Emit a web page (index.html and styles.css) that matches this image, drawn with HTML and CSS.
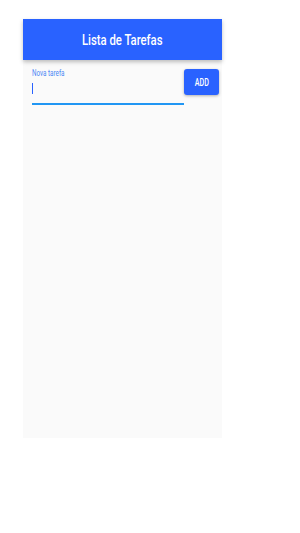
FILE: index.html
```html
<!DOCTYPE html>
<html lang="pt">
  <head>
    <meta charset="UTF-8" />
    <meta name="viewport" content="width=device-width, initial-scale=1.0" />
    <title>Lista de Tarefas</title>
    <link rel="stylesheet" href="styles.css">
  </head>
  <body>
    <div class="app">
      <header class="app-bar">
        <h1>Lista de Tarefas</h1>
      </header>

      <div class="form-row">
        <div class="field">
          <label class="field-label">Nova tarefa</label>
          <div class="field-input">
            <span class="cursor"></span>
          </div>
        </div>
        <button class="add-btn"><span>ADD</span></button>
      </div>
    </div>
  </body>
</html>
```

FILE: styles.css
```css
body {
  margin: 0;
  padding: 19px 0 0 23px;
  background: #fff;
  font-family: Roboto, "Liberation Sans", sans-serif;
}

.app {
  width: 199px;
  height: 419px;
  background: #fafafa;
  display: flex;
  flex-direction: column;
}

.app-bar {
  height: 41px;
  background: #2962ff;
  display: flex;
  align-items: center;
  justify-content: center;
  box-shadow: 0 2px 4px rgba(0, 0, 0, 0.25);
  position: relative;
  z-index: 1;
}

/* the text in this app renders narrow, so squeeze it a bit */
.app-bar h1 {
  margin: 0;
  color: #fff;
  font-size: 15.5px;
  font-weight: 500;
  transform: scaleX(0.73);
}

.form-row {
  display: flex;
  align-items: flex-start;
  padding: 8px 3px 0 9px;
}

.field {
  width: 152px;
  display: flex;
  flex-direction: column;
}

.field-label {
  font-size: 8.5px;
  line-height: 10px;
  color: #4a86f5;
  transform: scaleX(0.74);
  transform-origin: left center;
  white-space: nowrap;
}

.field-input {
  height: 20px;
  padding-top: 5px;
  border-bottom: 2px solid #2196f3;
}

.cursor {
  display: block;
  width: 1px;
  height: 11px;
  background: #2962ff;
}

.add-btn {
  width: 35px;
  height: 26px;
  margin: 1px 0 0;
  padding: 0;
  border: none;
  border-radius: 3px;
  background: #2962ff;
  color: #fff;
  font-family: Roboto, "Liberation Sans", sans-serif;
  font-size: 10px;
  font-weight: 500;
  box-shadow: 0 1px 3px rgba(0, 0, 0, 0.3);
}

.add-btn span {
  display: inline-block;
  transform: scaleX(0.72);
}
```
